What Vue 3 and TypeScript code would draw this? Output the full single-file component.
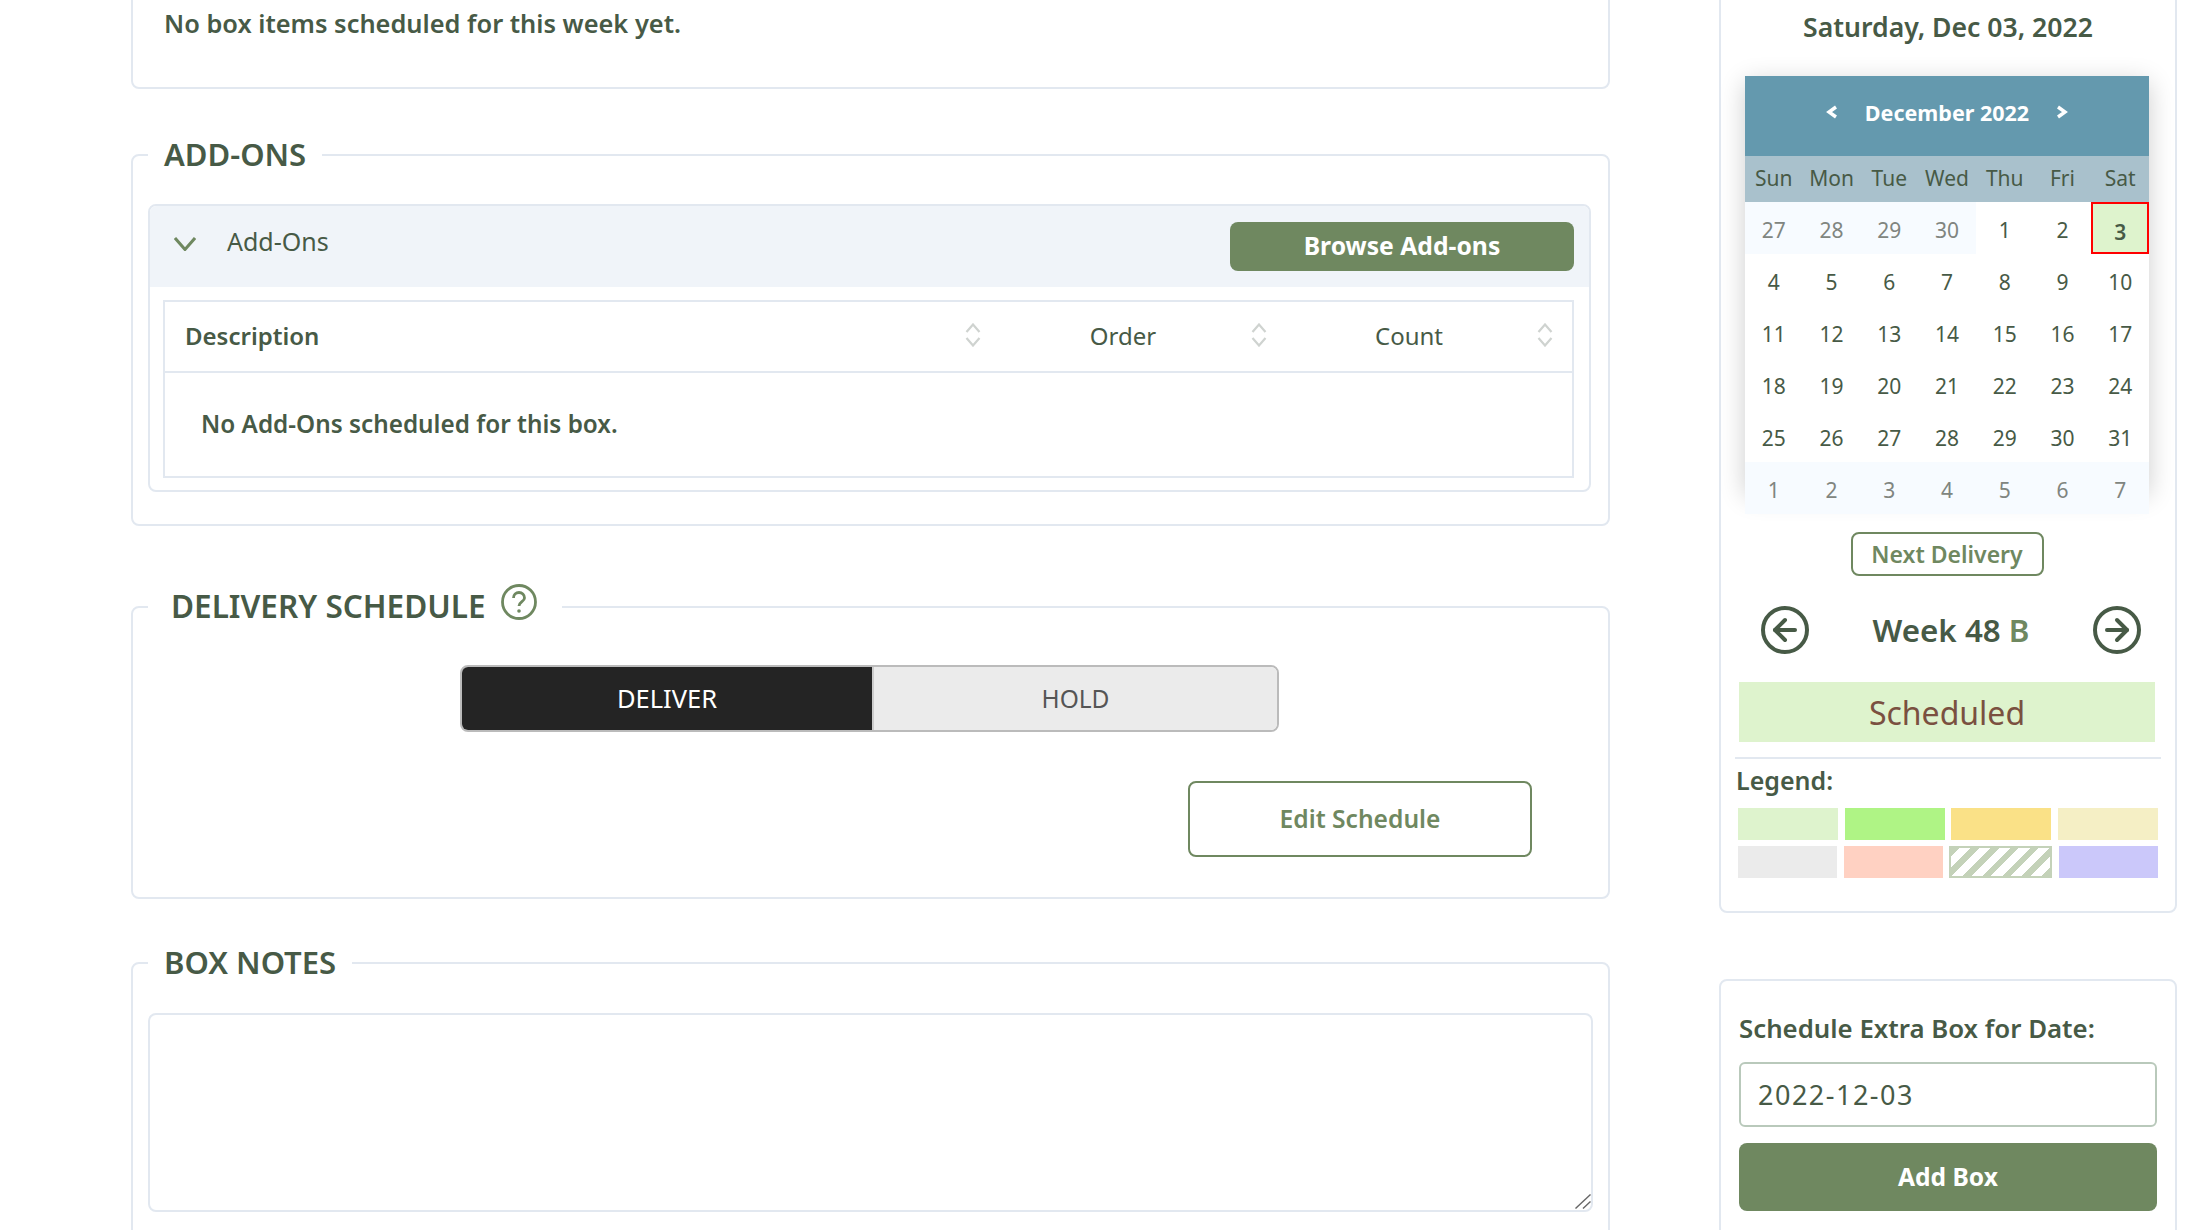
<script setup lang="ts">
interface Day { n: number; muted: boolean; selected: boolean }
const weekdays: string[] = ['Sun', 'Mon', 'Tue', 'Wed', 'Thu', 'Fri', 'Sat']
const days: Day[] = []
for (const n of [27, 28, 29, 30]) days.push({ n, muted: true, selected: false })
for (let n = 1; n <= 31; n++) days.push({ n, muted: false, selected: n === 3 })
for (let n = 1; n <= 7; n++) days.push({ n, muted: true, selected: false })
const columns: string[] = ['Order', 'Count']
const legendRow1: string[] = ['#def3cd', '#aff485', '#fae187', '#f5efc5']
const legendRow2: string[] = ['#ebebeb', '#ffd1c2', '', '#cbc8fa']
</script>

<template>
  <div class="page">
    <main class="left">
      <section class="box first">
        <p class="strong">No box items scheduled for this week yet.</p>
      </section>

      <fieldset class="box addons">
        <legend class="legend">ADD-ONS</legend>
        <div class="panel">
          <div class="panel-head">
            <svg class="chev" viewBox="0 0 22 14" width="22" height="14"><polyline points="1,1 11,12.5 21,1" fill="none" stroke="#6f8860" stroke-width="3" /></svg>
            <span class="panel-title">Add-Ons</span>
            <button class="btn-solid browse">Browse Add-ons</button>
          </div>
          <div class="table">
            <div class="thead">
              <div class="th desc">Description
                <svg class="sort" viewBox="0 0 16 24" width="16" height="24"><polyline points="1.5,9 8,1.5 14.5,9" /><polyline points="1.5,15 8,22.5 14.5,15" /></svg>
              </div>
              <div v-for="c in columns" :key="c" class="th">{{ c }}
                <svg class="sort" viewBox="0 0 16 24" width="16" height="24"><polyline points="1.5,9 8,1.5 14.5,9" /><polyline points="1.5,15 8,22.5 14.5,15" /></svg>
              </div>
            </div>
            <div class="tbody strong">No Add-Ons scheduled for this box.</div>
          </div>
        </div>
      </fieldset>

      <fieldset class="box delivery">
        <legend class="legend legend-delivery">DELIVERY SCHEDULE
          <svg class="help" viewBox="0 0 36 36" width="36" height="36">
            <circle cx="18" cy="18" r="16.5" fill="none" stroke="#6f8860" stroke-width="2.8" />
            <path d="M12.5 14a5.5 5.5 0 0 1 11 0c0 3.5-5.5 4-5.5 8" fill="none" stroke="#6f8860" stroke-width="2.8" />
            <circle cx="18" cy="27" r="1.8" fill="#6f8860" />
          </svg>
        </legend>
        <div class="toggle">
          <div class="tog on">DELIVER</div>
          <div class="tog off">HOLD</div>
        </div>
        <div class="edit-row"><button class="btn-outline edit">Edit Schedule</button></div>
      </fieldset>

      <fieldset class="box notes">
        <legend class="legend">BOX NOTES</legend>
        <div class="area-wrap">
          <textarea class="area"></textarea>
          <svg class="grip" viewBox="0 0 16 15" width="16" height="15"><line x1="0.5" y1="14.5" x2="15.5" y2="0.5" /><line x1="8" y1="14.5" x2="15.5" y2="7.5" /></svg>
        </div>
        <div class="fade"></div>
      </fieldset>
    </main>

    <aside class="right">
      <section class="side cal-card">
        <h2 class="date">Saturday, Dec 03, 2022</h2>
        <div class="cal">
          <div class="cal-head">
            <svg viewBox="0 0 12 14" width="12" height="14"><polyline points="10,2 3,7 10,12" fill="none" stroke="#fff" stroke-width="3.4" /></svg>
            <span class="month">December 2022</span>
            <svg viewBox="0 0 12 14" width="12" height="14"><polyline points="2,2 9,7 2,12" fill="none" stroke="#fff" stroke-width="3.4" /></svg>
          </div>
          <div class="cal-week"><span v-for="w in weekdays" :key="w">{{ w }}</span></div>
          <div class="cal-grid">
            <span v-for="(d, i) in days" :key="i" class="day" :class="{ muted: d.muted, selected: d.selected }">{{ d.n }}</span>
          </div>
        </div>
        <div class="next-row"><button class="btn-outline next">Next Delivery</button></div>
        <div class="week-row">
          <svg viewBox="0 0 48 48" width="48" height="48" class="arrow">
            <circle cx="24" cy="24" r="22" /><polyline points="24,14 14,24 24,34" /><line x1="14" y1="24" x2="34" y2="24" />
          </svg>
          <span class="week">Week 48 <b>B</b></span>
          <svg viewBox="0 0 48 48" width="48" height="48" class="arrow">
            <circle cx="24" cy="24" r="22" /><polyline points="24,14 34,24 24,34" /><line x1="14" y1="24" x2="34" y2="24" />
          </svg>
        </div>
        <div class="status">Scheduled</div>
        <hr class="rule" />
        <div class="legend-label">Legend:</div>
        <div class="swatches">
          <span v-for="c in legendRow1" :key="c" class="sw" :style="{ background: c }"></span>
        </div>
        <div class="swatches two">
          <template v-for="(c, i) in legendRow2" :key="i">
            <span v-if="c" class="sw" :style="{ background: c }"></span>
            <span v-else class="sw hatch"></span>
          </template>
        </div>
      </section>

      <section class="side extra">
        <label class="extra-label" for="extra-date">Schedule Extra Box for Date:</label>
        <input id="extra-date" class="date-input" type="text" value="2022-12-03" />
        <button class="btn-solid add">Add Box</button>
      </section>
    </aside>
  </div>
</template>

<style>
html, body { margin: 0; background: #fff; overflow: hidden; }
</style>

<style scoped>
* { box-sizing: border-box; }
.page {
  display: flex;
  align-items: flex-start;
  gap: 109px;
  height: 1230px;
  overflow: hidden;
  padding-left: 131px;
  font-family: "Noto Sans", "Open Sans", sans-serif;
  color: #475a46;
  font-size: 25px;
}
.left { width: 1479px; flex: none; margin-top: -60px; }
.right { width: 458px; flex: none; margin-top: -60px; }

.box { margin: 0; border: 2px solid #e2e8f0; border-radius: 8px; min-width: 0; padding: 0 17px; }
.first { height: 149px; padding: 60px 31px 0; }
.first p { margin: 2px 0 0; line-height: 38px; font-size: 25.4px; }
.strong { font-weight: 600; }

.legend { padding: 0 16px; margin-left: -2px; font-size: 31px; font-weight: 600; line-height: 47px; height: 48px; text-transform: uppercase; }

.addons { margin-top: 42px; height: 395px; }
.panel { margin-top: 25px; margin-left: -2px; height: 288px; border: 2px solid #e2e8f0; border-radius: 8px; }
.panel-head { display: flex; align-items: center; height: 81px; background: #f0f4f9; padding: 0 15px 0 24px; border-radius: 6px 6px 0 0; }
.chev { margin-top: -6px; }
.panel-title { margin-left: 31px; margin-top: -12px; }
.browse { margin-left: auto; width: 344px; height: 49px; padding: 0 0 3px; font-size: 24.7px; }

.table { margin: 13px 15px 0 13px; height: 178px; border: 2px solid #e2e8f0; }
.thead { display: grid; grid-template-columns: 1fr 286px 286px; height: 71px; border-bottom: 2px solid #e2e8f0; padding: 0 20px 3px 20px; align-items: center; font-size: 24px; }
.th { position: relative; text-align: center; }
.th.desc { text-align: left; font-weight: 600; }
.sort { position: absolute; right: -1px; top: 50%; transform: translateY(-50%); fill: none; stroke: #cfd3d0; stroke-width: 2.2; }
.tbody { padding: 34px 36px 0; line-height: 34px; font-size: 24.3px; }

.btn-solid { border: none; background: #6f8860; color: #fff; border-radius: 8px; font-family: inherit; font-weight: 700; }
.btn-outline { background: #fff; border: 2px solid #6f8860; color: #6f8860; border-radius: 8px; font-family: inherit; font-weight: 600; }

.delivery { margin-top: 57px; height: 316px; }
.legend-delivery { display: flex; align-items: center; gap: 15px; padding: 0 25px 3px 23px; font-size: 31.5px; }
.help { margin-top: -7px; }
.toggle { display: flex; width: 819px; height: 67px; margin: 34px 0 0 310px; border: 2px solid #bbb; border-radius: 8px; overflow: hidden; }
.tog { display: flex; align-items: center; justify-content: center; padding-bottom: 1px; }
.on { flex: 0 0 410px; background: #242424; color: #fff; font-size: 25.5px; }
.off { flex: 1; background: #ebebeb; color: #555; border-left: 2px solid #ccc; font-size: 24.5px; }
.edit-row { display: flex; justify-content: flex-end; margin: 49px 59px 0 0; }
.edit { width: 344px; height: 76px; padding: 0 0 2px; font-size: 24.6px; }

.notes { position: relative; margin-top: 40px; height: 440px; }
.area-wrap { position: relative; margin: 26px 0 0 -2px; width: 1445px; }
.area { display: block; width: 100%; height: 199px; border: 2px solid #e2e8f0; border-radius: 8px; resize: none; background: #fff; }
.grip { position: absolute; right: 2px; bottom: 3px; stroke: #666; stroke-width: 1.4; fill: none; }
.fade { position: absolute; left: 261px; top: 273px; width: 994px; height: 18px; background: radial-gradient(ellipse 50% 100% at 50% 100%, #f8f8f8 40%, rgba(255, 255, 255, 0) 100%); }

.side { border: 2px solid #e2e8f0; border-radius: 8px; }
.cal-card { height: 973px; padding: 58px 24px 0; }
.date { margin: 0; text-align: center; font-size: 26.6px; font-weight: 600; line-height: 54px; }
.cal { position: relative; margin: 22px 0 0 0; width: 404px; height: 414px; box-shadow: 0 6px 24px rgba(0, 0, 0, 0.2); background: #fff; }
.cal-head { display: flex; align-items: center; justify-content: center; gap: 27px; height: 80px; padding-bottom: 8px; background: #6499ae; color: #fff; }
.month { font-weight: 700; font-size: 21.5px; }
.cal-week { display: grid; grid-template-columns: repeat(7, 1fr); height: 46px; padding-bottom: 2px; align-items: center; text-align: center; background: #a9c1cc; font-size: 21px; }
.cal-grid { display: grid; grid-template-columns: repeat(7, 1fr); grid-auto-rows: 52px; background: #fff; }
.day { display: flex; align-items: center; justify-content: center; font-size: 21px; padding-top: 4px; }
.muted { background: #f7fbff; color: #808580; }
.selected { background: #def3cd; border: 2px solid #f00; font-weight: 600; padding-top: 7px; }

.next-row { display: flex; justify-content: center; margin: 42px 2px 0 0; }
.next { width: 193px; height: 44px; padding: 0; font-size: 23px; }
.week-row { display: flex; align-items: center; justify-content: space-between; margin: 30px 10px 0 16px; }
.arrow { fill: none; stroke: #475a46; stroke-width: 4; stroke-linecap: round; stroke-linejoin: round; }
.week { font-size: 31.3px; font-weight: 600; }
.week b { color: #6f8860; font-weight: 600; }
.status { margin: 28px 0 0 -6px; width: 416px; height: 60px; display: flex; align-items: center; justify-content: center; background: #def3cd; color: #7a5040; font-size: 32px; }
.rule { margin: 15px 0 0 -10px; width: 426px; height: 2px; border: none; background: #e2e8f0; }
.legend-label { margin: 4px 0 0 -9px; font-weight: 600; font-size: 25px; line-height: 34px; }
.swatches { display: flex; justify-content: space-between; margin: 11px 0 0 -7px; width: 420px; }
.swatches.two { margin-top: 6px; }
.sw { width: 100px; height: 32px; }
.two .sw { width: 99px; }
.two .hatch { width: 103px; border: 2px solid #c4d2b9; background: repeating-linear-gradient(135deg, #c4d2b9 0 6px, #fff 6px 14px); }

.extra { margin-top: 66px; height: 300px; padding: 0 18px; }
.extra-label { display: block; margin-top: 30px; font-size: 25.8px; font-weight: 600; line-height: 34px; }
.date-input { display: block; width: 418px; height: 65px; margin-top: 17px; padding: 0 17px; border: 2px solid #b9c9bb; border-radius: 6px; font-family: inherit; font-size: 27px; letter-spacing: 1.5px; color: #475a46; }
.add { display: block; width: 418px; height: 68px; margin-top: 16px; padding: 0 0 2px; font-size: 24.6px; }
</style>
